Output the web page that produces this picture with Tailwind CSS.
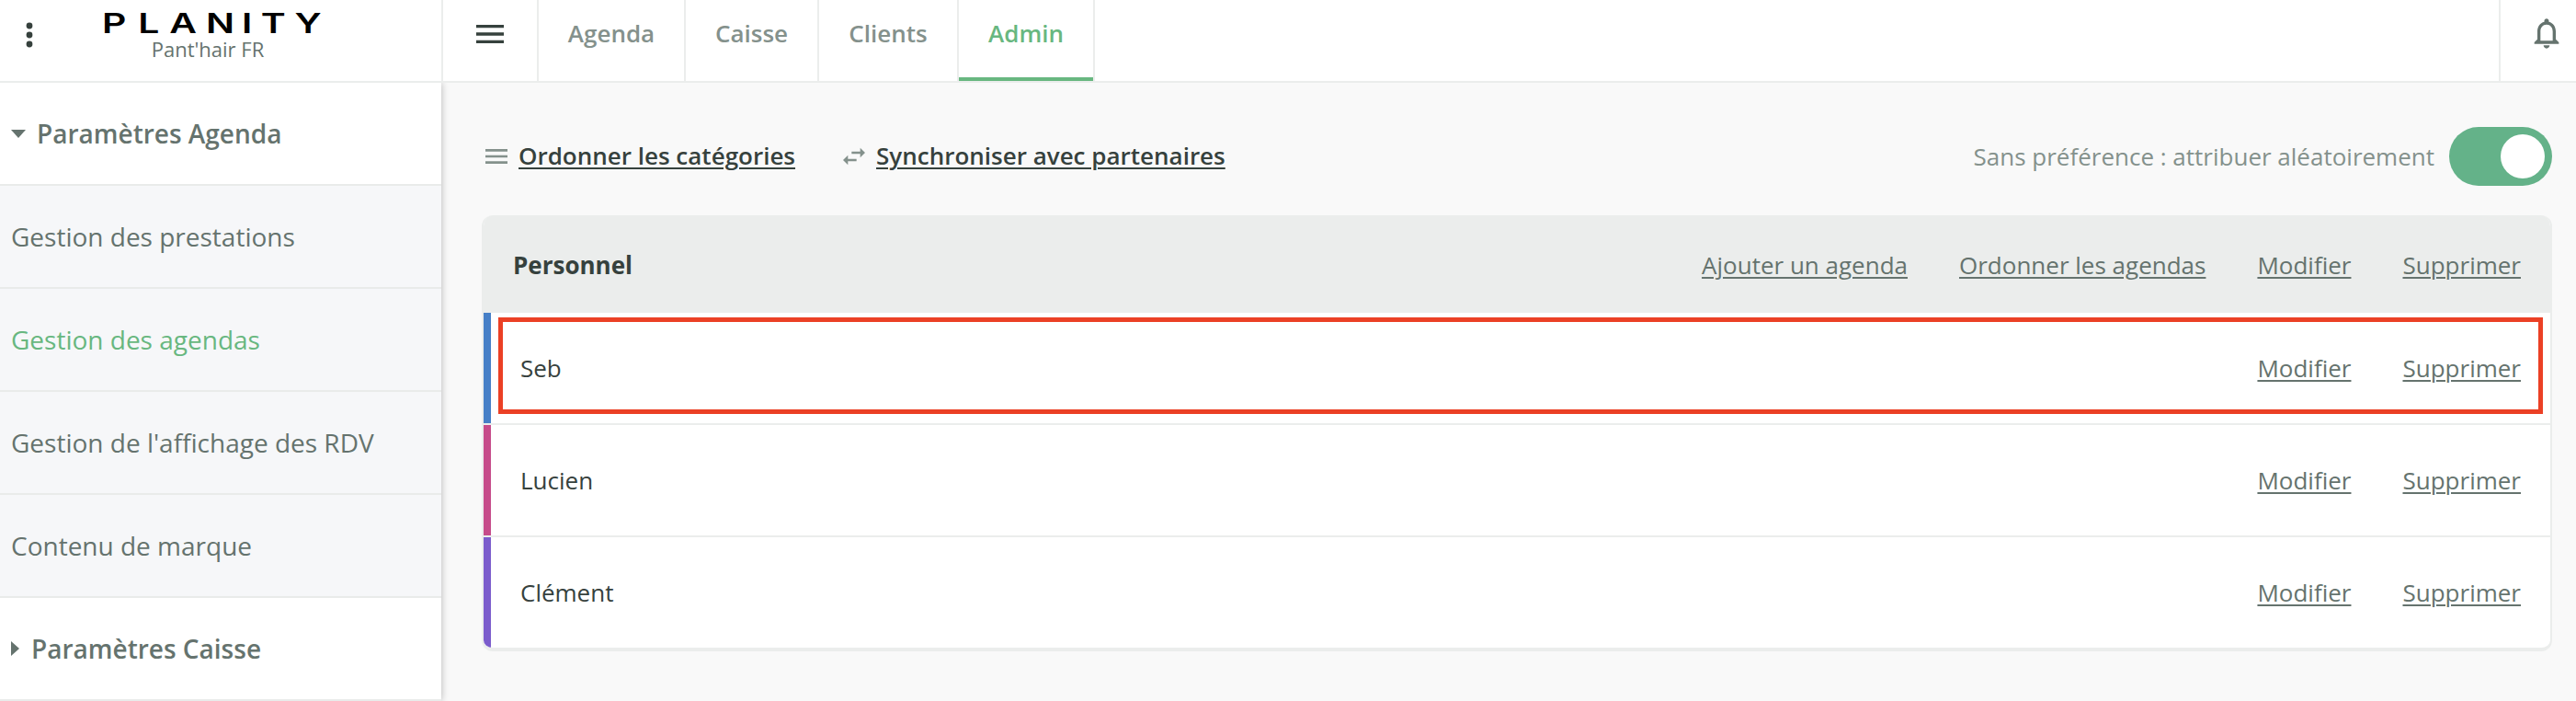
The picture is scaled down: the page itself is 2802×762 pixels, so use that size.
<!DOCTYPE html>
<html lang="fr">
<head>
<meta charset="utf-8">
<title>Planity</title>
<script src="https://cdn.jsdelivr.net/npm/@tailwindcss/browser@4"></script>
</head>
<body class="h-[762px] w-[2802px] overflow-hidden bg-[#f9f9f9] font-['Open_Sans',sans-serif] text-[26px] leading-[36px] text-[#65736e]">
<div class="flex h-full flex-col">
  <header class="flex h-[90px] shrink-0 border-b-2 border-[#ebedec] bg-white">
    <div class="flex w-[482px] shrink-0 border-r-2 border-[#ebedec]">
      <svg class="ml-3 mt-[18px] h-10 w-10" viewBox="0 0 40 40" fill="#36413d"><circle cx="20" cy="10" r="3.4"/><circle cx="20" cy="20" r="3.4"/><circle cx="20" cy="30" r="3.4"/></svg>
      <div class="ml-[62px] w-[232px]">
        <svg class="mt-[14px] block h-[22px] w-[232px] overflow-visible font-['Inter',sans-serif] text-[30.3px] font-semibold" viewBox="0 0 232 22" fill="#000">
          <text transform="scale(1.35 1)" x="-2.3 26.8 52 81.4 110.3 125.7 153" y="22">PLANITY</text>
        </svg>
        <div class="mt-[3px] pr-[8px] text-center text-[22px] leading-[28px]">Pant'hair FR</div>
      </div>
    </div>
    <nav class="flex font-semibold text-[#84918c]">
      <div class="w-[104px] border-r-2 border-[#ebedec] pl-[31px] pt-[17px]"><svg class="h-10 w-10" viewBox="0 0 24 24" fill="#36413d"><path d="M3 18h18v-2H3v2zm0-5h18v-2H3v2zm0-7v2h18V6H3z"/></svg></div>
      <div class="w-[160px] border-r-2 border-[#ebedec] pt-[18px] text-center">Agenda</div>
      <div class="w-[145px] border-r-2 border-[#ebedec] pt-[18px] text-center">Caisse</div>
      <div class="w-[152px] border-r-2 border-[#ebedec] pt-[18px] text-center">Clients</div>
      <div class="w-[148px] border-r-2 border-[#ebedec]"><div class="h-[88px] border-b-4 border-[#68b780] pt-[18px] text-center text-[#68b780]">Admin</div></div>
    </nav>
    <div class="ml-auto w-[84px] border-l-2 border-[#ebedec] pl-[30px] pt-4"><svg class="h-10 w-10" viewBox="0 0 24 24" fill="#65736e"><path d="M12 22c1.100 0 2-.9 2-2h-4c0 1.100.9 2 2 2zm6-6v-5c0-3.070-1.630-5.640-4.500-6.320V4c0-.83-.67-1.500-1.500-1.500s-1.500.67-1.500 1.500v.68C7.640 5.360 6 7.920 6 11v5l-2 2v1h16v-1l-2-2zm-2 1H8v-6c0-2.480 1.510-4.500 4-4.500s4 2.020 4 4.500v6z"/></svg></div>
  </header>
  <div class="flex min-h-0 flex-1">
    <aside class="w-[480px] shrink-0 bg-[#f6f7f9] text-[28px] font-medium shadow-[0_0_8px_rgba(0,0,0,0.28)] [clip-path:inset(0_-12px_0_0)]">
      <div class="flex h-28 items-center border-b-2 border-[#e9ebea] bg-white pl-3 font-semibold"><svg class="mr-3 h-[9px] w-4" viewBox="0 0 16 9" fill="#65736e"><path d="M0 0H16L8 9z"/></svg>Paramètres Agenda</div>
      <div class="flex h-28 items-center border-b-2 border-[#e9ebea] pl-3">Gestion des prestations</div>
      <div class="flex h-28 items-center border-b-2 border-[#e9ebea] pl-3 text-[#68b780]">Gestion des agendas</div>
      <div class="flex h-28 items-center border-b-2 border-[#e9ebea] pl-3">Gestion de l'affichage des RDV</div>
      <div class="flex h-28 items-center border-b-2 border-[#e9ebea] pl-3">Contenu de marque</div>
      <div class="flex h-28 items-center border-b-2 border-[#e9ebea] bg-white pl-3 font-semibold"><svg class="mr-[13px] h-4 w-[9px]" viewBox="0 0 9 16" fill="#65736e"><path d="M0 0V16L9 8z"/></svg>Paramètres Caisse</div>
    </aside>
    <main class="flex-1 pl-[44px] pr-[26px] pt-12">
      <div class="flex h-16 items-center">
        <svg class="mr-2 h-8 w-8" viewBox="0 0 24 24" fill="#84918c"><path d="M3 18h18v-2H3v2zm0-5h18v-2H3v2zm0-7v2h18V6H3z"/></svg>
        <a class="pb-0.5 font-semibold text-[#36413d] underline decoration-2 underline-offset-[3px]">Ordonner les catégories</a>
        <svg class="ml-12 mr-2 h-8 w-8" viewBox="0 0 24 24" fill="#84918c"><path d="M6.990 11L3 15l3.990 4v-3H14v-2H6.990v-3zM21 9l-3.990-4v3H10v2h7.010v3L21 9z"/></svg>
        <a class="pb-0.5 font-semibold text-[#36413d] underline decoration-2 underline-offset-[3px]">Synchroniser avec partenaires</a>
        <span class="ml-auto mr-4 text-[#84918c]">Sans préférence : attribuer aléatoirement</span>
        <span class="flex h-16 w-28 justify-end rounded-full bg-[#64b289] p-2"><span class="h-12 w-12 rounded-full bg-white"></span></span>
      </div>
      <section class="mt-8 h-[474px] overflow-hidden rounded-xl border-x-2 border-b-4 border-[#ebedec] bg-white">
        <div class="flex h-[106px] items-center gap-14 bg-[#ebedec] px-8 pt-0.5">
          <h2 class="mr-auto font-bold text-[#36413d]">Personnel</h2>
          <a class="underline decoration-2 underline-offset-[3px]">Ajouter un agenda</a>
          <a class="underline decoration-2 underline-offset-[3px]">Ordonner les agendas</a>
          <a class="underline decoration-2 underline-offset-[3px]">Modifier</a>
          <a class="underline decoration-2 underline-offset-[3px]">Supprimer</a>
        </div>
        <div class="relative flex h-[122px] items-center gap-14 border-b-2 border-[#ebedec] pr-8">
          <span class="-mr-6 h-full w-2 bg-[#467fc7]"></span>
          <span class="mr-auto text-[#36413d]">Seb</span>
          <a class="underline decoration-2 underline-offset-[3px]">Modifier</a>
          <a class="underline decoration-2 underline-offset-[3px]">Supprimer</a>
          <div class="absolute left-4 right-2 top-[5px] h-[105px] border-[5px] border-[#eb4025]"></div>
        </div>
        <div class="flex h-[122px] items-center gap-14 border-b-2 border-[#ebedec] pr-8">
          <span class="-mr-6 h-full w-2 bg-[#c64b8a]"></span>
          <span class="mr-auto text-[#36413d]">Lucien</span>
          <a class="underline decoration-2 underline-offset-[3px]">Modifier</a>
          <a class="underline decoration-2 underline-offset-[3px]">Supprimer</a>
        </div>
        <div class="flex h-[120px] items-center gap-14 pr-8">
          <span class="-mr-6 h-full w-2 bg-[#7b5ccc]"></span>
          <span class="mr-auto text-[#36413d]">Clément</span>
          <a class="underline decoration-2 underline-offset-[3px]">Modifier</a>
          <a class="underline decoration-2 underline-offset-[3px]">Supprimer</a>
        </div>
      </section>
    </main>
  </div>
</div>
</body>
</html>
